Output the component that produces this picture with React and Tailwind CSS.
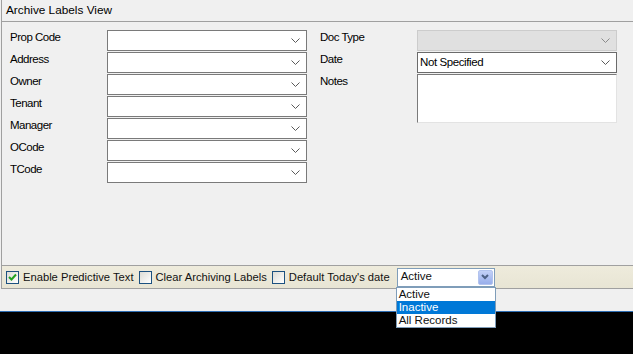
import React from 'react';

const Chevron = ({ color = '#5a5a5a' }) => (
  <svg width="9" height="5" viewBox="0 0 9 5" className="block">
    <path d="M0.5 0.5 L4.5 4.5 L8.5 0.5" fill="none" stroke={color} strokeWidth="1" />
  </svg>
);

const Combo = ({ value = '', disabled = false, focused = false }) => (
  <div
    className={`w-[200px] h-[21px] flex items-center justify-between pl-[2px] pr-[6px] border ${
      disabled
        ? 'bg-[#e0e0e0] border-[#cccccc]'
        : focused
        ? 'bg-white border-[#6b6b6b]'
        : 'bg-white border-[#7a7a7a]'
    }`}
  >
    <span className="text-[11.5px] tracking-[-0.4px] leading-none text-black">{value}</span>
    <Chevron color={disabled ? '#8a8a8a' : '#5a5a5a'} />
  </div>
);

const FieldRow = ({ label, children }) => (
  <div className="flex h-[21px]">
    <span className="w-[97px] text-[11.5px] tracking-[-0.5px] leading-[14px] text-black">{label}</span>
    {children}
  </div>
);

const CheckBox = ({ checked }) => (
  <div className="w-[13px] h-[13px] border border-[#1c5180] bg-gradient-to-br from-[#dcdcd6] to-white flex items-center justify-center">
    {checked && (
      <svg width="9" height="9" viewBox="0 0 9 9">
        <path d="M1 4 L3.5 6.5 L8 1.5" fill="none" stroke="#21a121" strokeWidth="2" />
      </svg>
    )}
  </div>
);

export default function App() {
  const leftFields = ['Prop Code', 'Address', 'Owner', 'Tenant', 'Manager', 'OCode', 'TCode'];

  return (
    <div className="relative w-[633px] h-[354px] overflow-hidden bg-[#f0f0f0] pl-px font-['Liberation_Sans',Arial,sans-serif]">
      {/* Header */}
      <div className="h-[22px] border-l border-b border-[#a0a0a0] pl-[4px] text-[11.8px] leading-[21px] text-black">
        Archive Labels View
      </div>

      {/* Form panel */}
      <div className="h-[243px] border-l border-[#a0a0a0] flex pt-[8px]">
        <div className="pl-[8px] flex flex-col gap-[1px]">
          {leftFields.map((f) => (
            <FieldRow key={f} label={f}>
              <Combo />
            </FieldRow>
          ))}
        </div>
        <div className="pl-[13px] flex flex-col gap-[1px]">
          <FieldRow label="Doc Type">
            <Combo disabled />
          </FieldRow>
          <FieldRow label="Date">
            <Combo value="Not Specified" focused />
          </FieldRow>
          <div className="flex">
            <span className="w-[97px] text-[11.5px] tracking-[-0.5px] leading-[14px] text-black">Notes</span>
            <div className="w-[200px] h-[49px] bg-white border border-t-[#7a7a7a] border-l-[#7a7a7a] border-r-[#e3e3e3] border-b-[#e3e3e3]" />
          </div>
        </div>
      </div>

      {/* Toolbar */}
      <div className="h-[24px] border-l border-y border-[#a0a0a0] bg-gradient-to-b from-[#eeebdc] to-[#e8e5d4] flex items-center pl-[4px] text-[11.2px] text-[#111]">
        <CheckBox checked />
        <span className="ml-[4px]">Enable Predictive Text</span>
        <div className="ml-[5px]"><CheckBox /></div>
        <span className="ml-[4px]">Clear Archiving Labels</span>
        <div className="ml-[5px]"><CheckBox /></div>
        <span className="ml-[4px]">Default Today's date</span>
        <div className="relative ml-[7px]">
          <div className="w-[98px] h-[19px] bg-white border border-[#7f9db9] flex items-center justify-between pl-[3px] pr-px">
            <span className="text-[11.5px]">Active</span>
            <div className="w-[15px] h-[15px] rounded-[2px] bg-gradient-to-b from-[#c3d1f7] to-[#98aeeb] border border-[#b2c3ee] flex items-center justify-center">
              <svg width="8" height="6" viewBox="0 0 8 6">
                <path d="M1 1 L4 4 L7 1" fill="none" stroke="#4d6185" strokeWidth="2" />
              </svg>
            </div>
          </div>
          <div className="absolute -left-px top-[19px] w-[100px] bg-white border border-[#7f9db9] z-10 text-[11.5px] leading-[13px]">
            <div className="pl-[2px]">Active</div>
            <div className="pl-[2px] bg-[#0078d7] text-white">Inactive</div>
            <div className="pl-[2px]">All Records</div>
          </div>
        </div>
      </div>

      {/* Spacer and dark area */}
      <div className="h-[22px]" />
      <div className="h-px bg-[#2e6db3] -ml-px" />
      <div className="h-[42px] bg-black -ml-px" />
    </div>
  );
}
